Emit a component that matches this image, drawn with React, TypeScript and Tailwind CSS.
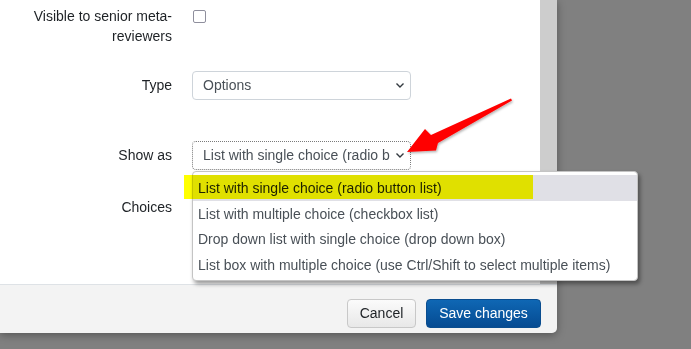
import React from "react";

const Chevron = () => (
  <svg width="10" height="7" viewBox="0 0 10 7" className="shrink-0">
    <path d="M1.5 1.5 L5 5 L8.5 1.5" fill="none" stroke="#343a40" strokeWidth="1.4" />
  </svg>
);

export default function App() {
  const items = [
    "List with single choice (radio button list)",
    "List with multiple choice (checkbox list)",
    "Drop down list with single choice (drop down box)",
    "List box with multiple choice (use Ctrl/Shift to select multiple items)",
  ];
  return (
    <div
      className="relative w-[691px] h-[349px] bg-[#808080] overflow-hidden text-[14px] text-[#1d2125]"
      style={{ fontFamily: '"Liberation Sans", Arial, sans-serif' }}
    >
      <div className="w-[557px] flex flex-col shadow-[0_2px_8px_rgba(0,0,0,0.35)] rounded-br-[5px]">
        <div className="flex h-[284px]">
          <div className="w-[540px] bg-white pt-[7px]">
            <div className="flex">
              <div className="w-[172px] text-right leading-[19.5px]">
                Visible to senior meta-
                <br />
                reviewers
              </div>
              <div className="ml-[21px] mt-[3px] w-[13px] h-[13px] border-[1.5px] border-[#8f8f9d] rounded-[2px] bg-white" />
            </div>
            <div className="flex items-center mt-[25px]">
              <div className="w-[172px] text-right">Type</div>
              <div className="ml-[20px] w-[219px] h-[29px] border border-[#ced4da] rounded-[4px] flex items-center justify-between pl-[10px] pr-[5px] text-[#495057]">
                <span>Options</span>
                <Chevron />
              </div>
            </div>
            <div className="flex items-center mt-[41px]">
              <div className="w-[172px] text-right">Show as</div>
              <div className="ml-[20px] w-[219px] h-[29px] border border-dotted border-[#7a7a7a] rounded-[4px] flex items-center justify-between pl-[10px] pr-[5px] text-[#495057]">
                <span className="whitespace-nowrap">List with single choice (radio b</span>
                <Chevron />
              </div>
            </div>
            <div className="flex mt-[27px] leading-[20px]">
              <div className="w-[172px] text-right">Choices</div>
            </div>
          </div>
          <div className="w-[17px] bg-[#cdcdcd]" />
        </div>
        <div className="h-[49px] bg-[#f3f3f3] border-t border-[#dee2e6] rounded-br-[5px] flex items-start justify-end gap-[10px] pt-[14px] pr-[16px]">
          <button className="h-[29px] w-[69px] rounded-[4px] border border-[#c8c8c8] bg-gradient-to-b from-[#fbfbfb] to-[#e8e8e8] text-[#1d2125] text-[14px]">
            Cancel
          </button>
          <button className="h-[29px] w-[115px] rounded-[4px] border border-[#0a4d8f] bg-gradient-to-b from-[#0f67b4] to-[#064b92] text-white text-[14px]">
            Save changes
          </button>
        </div>
      </div>

      {/* dropdown list */}
      <div className="absolute left-[192px] top-[171px] w-[446px] h-[110px] bg-white border border-[#c4c4c4] rounded-[4px] shadow-[2px_3px_4px_rgba(0,0,0,0.4)] pt-[3px]">
        {items.map((t, i) => (
          <div
            key={i}
            className={`h-[25.5px] leading-[26.5px] pl-[5px] whitespace-nowrap ${
              i === 0 ? "bg-[#e0e0e6] text-[#1d2125]" : "text-[#495057]"
            }`}
          >
            {t}
          </div>
        ))}
      </div>
      {/* highlighter */}
      <div className="absolute left-[184px] top-[175px] w-[349px] h-[24px] bg-[#ffff00] mix-blend-multiply" />

      {/* red arrow */}
      <svg className="absolute left-0 top-0 pointer-events-none" width="691" height="349">
        <defs>
          <filter id="sh" x="-20%" y="-20%" width="140%" height="140%">
            <feDropShadow dx="1" dy="1.5" stdDeviation="1.2" floodColor="#000" floodOpacity="0.3" />
          </filter>
        </defs>
        <polygon
          points="511,98.5 512,100.5 438,143 436,150.5 407,152 425,129 431,135"
          fill="#ff0000"
          filter="url(#sh)"
        />
      </svg>
    </div>
  );
}
